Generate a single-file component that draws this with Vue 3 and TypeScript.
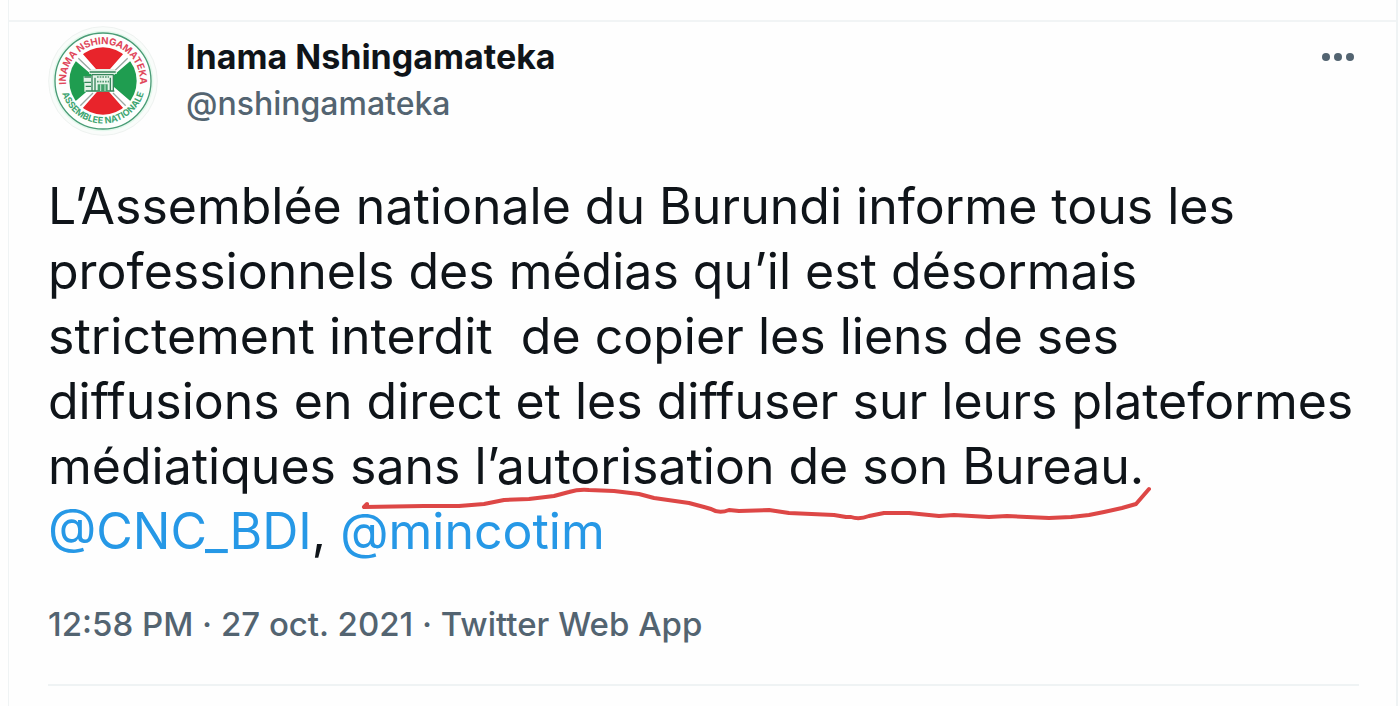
<script setup lang="ts">
interface Author {
  name: string
  handle: string
}

const author: Author = { name: 'Inama Nshingamateka', handle: '@nshingamateka' }

const lines: string[] = [
  'L’Assemblée nationale du Burundi informe tous les',
  'professionnels des médias qu’il est désormais',
  'strictement interdit  de copier les liens de ses',
  'diffusions en direct et les diffuser sur leurs plateformes',
  'médiatiques sans l’autorisation de son Bureau.',
]
</script>

<template>
  <main class="column">
    <article class="tweet">
      <header class="head">
        <a class="avatar" href="#" :aria-label="author.name">
          <svg viewBox="-165 -165 330 330">
            <defs>
              <path id="arc-top" d="M-107 30 A111 111 0 1 1 107 30" />
              <path id="arc-bottom" d="M-126 22 A128 128 0 0 0 126 22" />
              <clipPath id="disc"><circle r="101" /></clipPath>
            </defs>
            <circle r="163" fill="#f9fcfa" stroke="#eef2f0" stroke-width="3" />
            <circle r="151" fill="#e3f8ec" />
            <circle r="144" fill="#fdfffd" stroke="#4a9c76" stroke-width="4" />
            <g clip-path="url(#disc)">
              <rect x="-105" y="-105" width="210" height="210" fill="#fff" />
              <path d="M-86 -110 L0 -12 L86 -110Z M-86 110 L0 12 L86 110Z" fill="#e8242b" />
              <path d="M-112 -86 L-12 0 L-112 86Z M112 -86 L12 0 L112 86Z" fill="#1f9d50" />
              <path
                d="M-78 -72 L-32 -28 M78 -72 L32 -28 M-72 78 L-30 36 M72 78 L30 36"
                fill="none" stroke="#9aa7a1" stroke-width="4"
              />
              <path d="M-42 -29 L-34 -36 H32 L42 -29 V-22 H32 V32 H-56 V4 H-58 V-14 H-34 V-22 H-42Z" fill="#e4f3e8" />
              <path
                d="M-40 -27 H38 M-34 -19 H32 M-56 -12 H-36 M-56 4 H-36 M-52 16 H-36 M-52 30 H34 M-33 -19 V30 M-24 -10 V30 M22 -10 V30 M31 -19 V30"
                fill="none" stroke="#34865a" stroke-width="4"
              />
              <path d="M-18 -12 H18 M-18 2 H18" stroke="#559c74" stroke-width="5" stroke-dasharray="5 3" />
              <path d="M-16 10 H14 V30 H-16Z" fill="#43a06a" />
              <path d="M-7 10 V30 M6 10 V30" stroke="#c9e8d5" stroke-width="3" />
            </g>
            <text class="seal seal-top"><textPath href="#arc-top" startOffset="50%">INAMA NSHINGAMATEKA</textPath></text>
            <text class="seal seal-bottom"><textPath href="#arc-bottom" startOffset="50%">ASSEMBLEE NATIONALE</textPath></text>
          </svg>
        </a>
        <div class="names">
          <a class="name" href="#">{{ author.name }}</a>
          <a class="handle" href="#">{{ author.handle }}</a>
        </div>
        <button class="more" type="button" aria-label="Plus">
          <svg viewBox="0 0 34 10">
            <circle cx="5" cy="5" r="4" />
            <circle cx="17" cy="5" r="4" />
            <circle cx="29" cy="5" r="4" />
          </svg>
        </button>
      </header>

      <div class="body">
        <p class="text">
          <span v-for="line in lines" :key="line" class="line">{{ line }}</span>
          <span class="line"><a href="#">@CNC_BDI</a>, <a href="#">@mincotim</a></span>
        </p>
        <svg class="mark" viewBox="0 0 800 40" aria-hidden="true">
          <path
            d="M8 18 L5 21 L65 20 L100 20 L125 18 L145 14 L170 13 L195 10 L210 6 Q220 3 230 4 L255 5 L280 8 L295 12 L330 17 L345 21 L352 23 Q360 28 370 24 L380 25 L410 24 L430 27 L475 29 L487 31 L492 31 Q500 34 510 30 L525 27 L550 27 L580 30 L595 29 L630 31 L648 30 L690 32 L712 31 L730 29 L745 26 L763 22 L777 18 L790 3"
          />
        </svg>
      </div>

      <footer class="meta">
        <a href="#">12:58 PM · 27 oct. 2021</a> · <a href="#">Twitter Web App</a>
      </footer>
    </article>
  </main>
</template>

<style>
body {
  background: #fefefe;
}
</style>

<style scoped>
.column {
  box-sizing: border-box;
  min-height: 100vh;
  margin: 0 2px 0 8px;
  padding-top: 20px;
  border: solid #eff3f4;
  border-width: 0 2px 0 1px;
  font-family: Inter, "Liberation Sans", sans-serif;
  font-weight: 450;
  color: #0f1419;
}
.tweet {
  padding: 4px 37px 0 39px;
  border-top: 2px solid #f1f4f5;
}
.head {
  display: flex;
  align-items: flex-start;
}
.avatar {
  width: 110px;
  height: 110px;
}
.avatar svg {
  display: block;
  width: 100%;
}
.seal {
  font-weight: 700;
  text-anchor: middle;
}
.seal-top {
  font-size: 29px;
  fill: #e0475a;
}
.seal-bottom {
  font-size: 27px;
  fill: #3fa571;
}
.names {
  display: flex;
  flex: 1;
  flex-direction: column;
  padding: 7px 0 0 28px;
}
a {
  color: inherit;
  text-decoration: none;
}
.name,
.handle {
  font-size: 34px;
  line-height: 47px;
}
.name {
  font-weight: 700;
}
.handle {
  font-size: 32px;
}
.handle,
.meta {
  color: #536471;
}
.more {
  margin: 26px 4px 0 0;
  padding: 0;
  border: 0;
  background: none;
}
.more svg {
  display: block;
  width: 34px;
  height: 10px;
  fill: #536471;
}
.body {
  position: relative;
  margin-top: 38px;
}
.text {
  margin: 0;
  font-size: 50px;
  font-weight: 425;
  line-height: 65px;
}
.line {
  display: block;
  white-space: pre;
}
.text a {
  color: #2698e6;
}
.mark {
  position: absolute;
  top: 312px;
  left: 311px;
  width: 800px;
  height: 40px;
}
.mark path {
  fill: none;
  stroke: #dd4746;
  stroke-width: 4;
  stroke-linecap: round;
  stroke-linejoin: round;
}
.meta {
  margin-top: 34px;
  padding-bottom: 34px;
  border-bottom: 2px solid #eff3f4;
  font-size: 33px;
  line-height: 52px;
}
</style>
